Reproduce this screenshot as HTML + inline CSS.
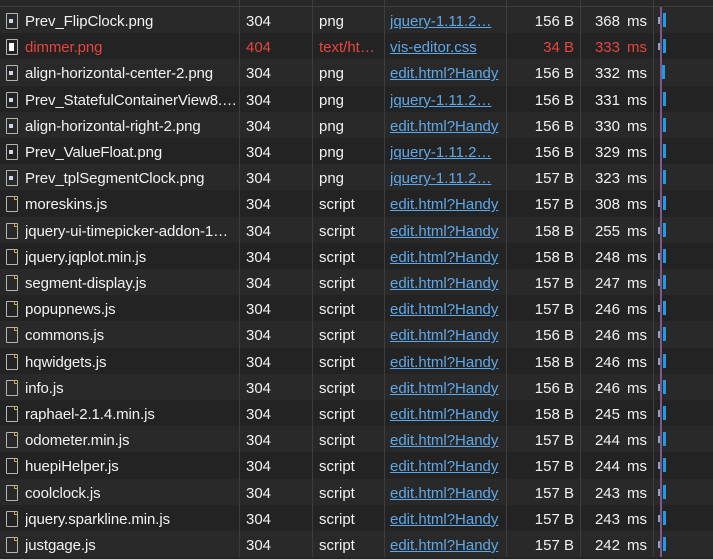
<!DOCTYPE html>
<html><head><meta charset="utf-8"><style>
body{margin:0;width:713px;height:557px;overflow:hidden;background:#242424;font-family:"Segoe UI","Liberation Sans",sans-serif;font-size:15px;color:#f2f2f2;position:relative}
.hdr{position:absolute;left:0;top:0;width:713px;height:7px;background:#282828;border-bottom:1px solid #3d3d3d;box-sizing:border-box}
.row{position:absolute;left:0;width:713px;height:26.2px;line-height:26px}
.row:nth-child(odd){background:#292929}
.row:nth-child(even){background:#232323}
.c{position:absolute;top:2px;white-space:nowrap;overflow:hidden}
.n{left:25px;width:212px;letter-spacing:-0.1px}
.s{left:246px}
.t{left:319px;width:60px}
.i{left:390px;color:#5fa8e8;text-decoration:underline;width:112px}
.z{right:139px;text-align:right}
.ms{left:586px;width:34px;text-align:right}
.u{left:627px}
.red .c{color:#e8443f}
.red .i{color:#5fa8e8}
.ic{position:absolute;left:6px;top:6px;width:12px;height:16px;border:1.5px solid #b5b5b5;border-radius:1px;box-sizing:border-box}
.img .ic:before{content:"";position:absolute;left:2px;top:5px;width:4px;height:4px;background:#cfd8e8}
.red .ic:before{background:#fff;width:5px;height:8px;top:3px}
.js .ic:after{content:"";position:absolute;right:-1px;top:-1px;width:3px;height:3px;border-left:1.5px solid #c9a84a;border-bottom:1.5px solid #c9a84a}
.vl{position:absolute;top:0;width:1px;height:557px;background:#3d3d3d}
.bar{position:absolute;left:663px;top:6px;width:3px;height:14px;background:#1a9ce8}
.g{position:absolute;left:658px;top:10px;width:2px;height:7px;background:#8da3c0}
</style></head><body>
<div class="hdr"></div>
<div id="rows" style="position:absolute;left:0;top:7px">
<div class="row img" style="top:0"><div class="ic"></div><div class="c n">Prev_FlipClock.png</div><div class="c s">304</div><div class="c t">png</div><div class="c i">jquery-1.11.2…</div><div class="c z">156 B</div><div class="c ms">368</div><div class="c u">ms</div><div class="g"></div><div class="bar"></div></div>
<div class="row img red" style="top:26.2px"><div class="ic"></div><div class="c n">dimmer.png</div><div class="c s">404</div><div class="c t">text/ht…</div><div class="c i">vis-editor.css</div><div class="c z">34 B</div><div class="c ms">333</div><div class="c u">ms</div><div class="g"></div><div class="bar"></div></div>
<div class="row img" style="top:52.4px"><div class="ic"></div><div class="c n">align-horizontal-center-2.png</div><div class="c s">304</div><div class="c t">png</div><div class="c i">edit.html?Handy</div><div class="c z">156 B</div><div class="c ms">332</div><div class="c u">ms</div><div class="bar" style="left:662px"></div></div>
<div class="row img" style="top:78.6px"><div class="ic"></div><div class="c n">Prev_StatefulContainerView8.…</div><div class="c s">304</div><div class="c t">png</div><div class="c i">jquery-1.11.2…</div><div class="c z">156 B</div><div class="c ms">331</div><div class="c u">ms</div><div class="bar"></div></div>
<div class="row img" style="top:104.8px"><div class="ic"></div><div class="c n">align-horizontal-right-2.png</div><div class="c s">304</div><div class="c t">png</div><div class="c i">edit.html?Handy</div><div class="c z">156 B</div><div class="c ms">330</div><div class="c u">ms</div><div class="bar"></div></div>
<div class="row img" style="top:131px"><div class="ic"></div><div class="c n">Prev_ValueFloat.png</div><div class="c s">304</div><div class="c t">png</div><div class="c i">jquery-1.11.2…</div><div class="c z">156 B</div><div class="c ms">329</div><div class="c u">ms</div><div class="bar"></div></div>
<div class="row img" style="top:157.2px"><div class="ic"></div><div class="c n">Prev_tplSegmentClock.png</div><div class="c s">304</div><div class="c t">png</div><div class="c i">jquery-1.11.2…</div><div class="c z">157 B</div><div class="c ms">323</div><div class="c u">ms</div><div class="bar"></div></div>
<div class="row js" style="top:183.4px"><div class="ic"></div><div class="c n">moreskins.js</div><div class="c s">304</div><div class="c t">script</div><div class="c i">edit.html?Handy</div><div class="c z">157 B</div><div class="c ms">308</div><div class="c u">ms</div><div class="g"></div><div class="bar"></div></div>
<div class="row js" style="top:209.6px"><div class="ic"></div><div class="c n">jquery-ui-timepicker-addon-1…</div><div class="c s">304</div><div class="c t">script</div><div class="c i">edit.html?Handy</div><div class="c z">158 B</div><div class="c ms">255</div><div class="c u">ms</div><div class="g"></div><div class="bar"></div></div>
<div class="row js" style="top:235.8px"><div class="ic"></div><div class="c n">jquery.jqplot.min.js</div><div class="c s">304</div><div class="c t">script</div><div class="c i">edit.html?Handy</div><div class="c z">158 B</div><div class="c ms">248</div><div class="c u">ms</div><div class="g"></div><div class="bar"></div></div>
<div class="row js" style="top:262px"><div class="ic"></div><div class="c n">segment-display.js</div><div class="c s">304</div><div class="c t">script</div><div class="c i">edit.html?Handy</div><div class="c z">157 B</div><div class="c ms">247</div><div class="c u">ms</div><div class="g"></div><div class="bar"></div></div>
<div class="row js" style="top:288.2px"><div class="ic"></div><div class="c n">popupnews.js</div><div class="c s">304</div><div class="c t">script</div><div class="c i">edit.html?Handy</div><div class="c z">157 B</div><div class="c ms">246</div><div class="c u">ms</div><div class="g"></div><div class="bar"></div></div>
<div class="row js" style="top:314.4px"><div class="ic"></div><div class="c n">commons.js</div><div class="c s">304</div><div class="c t">script</div><div class="c i">edit.html?Handy</div><div class="c z">156 B</div><div class="c ms">246</div><div class="c u">ms</div><div class="g"></div><div class="bar"></div></div>
<div class="row js" style="top:340.6px"><div class="ic"></div><div class="c n">hqwidgets.js</div><div class="c s">304</div><div class="c t">script</div><div class="c i">edit.html?Handy</div><div class="c z">158 B</div><div class="c ms">246</div><div class="c u">ms</div><div class="g"></div><div class="bar"></div></div>
<div class="row js" style="top:366.8px"><div class="ic"></div><div class="c n">info.js</div><div class="c s">304</div><div class="c t">script</div><div class="c i">edit.html?Handy</div><div class="c z">156 B</div><div class="c ms">246</div><div class="c u">ms</div><div class="g"></div><div class="bar"></div></div>
<div class="row js" style="top:393px"><div class="ic"></div><div class="c n">raphael-2.1.4.min.js</div><div class="c s">304</div><div class="c t">script</div><div class="c i">edit.html?Handy</div><div class="c z">158 B</div><div class="c ms">245</div><div class="c u">ms</div><div class="g"></div><div class="bar"></div></div>
<div class="row js" style="top:419.2px"><div class="ic"></div><div class="c n">odometer.min.js</div><div class="c s">304</div><div class="c t">script</div><div class="c i">edit.html?Handy</div><div class="c z">157 B</div><div class="c ms">244</div><div class="c u">ms</div><div class="g"></div><div class="bar"></div></div>
<div class="row js" style="top:445.4px"><div class="ic"></div><div class="c n">huepiHelper.js</div><div class="c s">304</div><div class="c t">script</div><div class="c i">edit.html?Handy</div><div class="c z">157 B</div><div class="c ms">244</div><div class="c u">ms</div><div class="g"></div><div class="bar"></div></div>
<div class="row js" style="top:471.6px"><div class="ic"></div><div class="c n">coolclock.js</div><div class="c s">304</div><div class="c t">script</div><div class="c i">edit.html?Handy</div><div class="c z">157 B</div><div class="c ms">243</div><div class="c u">ms</div><div class="g"></div><div class="bar"></div></div>
<div class="row js" style="top:497.8px"><div class="ic"></div><div class="c n">jquery.sparkline.min.js</div><div class="c s">304</div><div class="c t">script</div><div class="c i">edit.html?Handy</div><div class="c z">157 B</div><div class="c ms">243</div><div class="c u">ms</div><div class="g"></div><div class="bar"></div></div>
<div class="row js" style="top:524px"><div class="ic"></div><div class="c n">justgage.js</div><div class="c s">304</div><div class="c t">script</div><div class="c i">edit.html?Handy</div><div class="c z">157 B</div><div class="c ms">242</div><div class="c u">ms</div><div class="g"></div><div class="bar"></div></div>
</div>
<div class="vl" style="left:239px"></div>
<div class="vl" style="left:312px"></div>
<div class="vl" style="left:384px"></div>
<div class="vl" style="left:506px"></div>
<div class="vl" style="left:580px"></div>
<div class="vl" style="left:653px"></div>
<div style="position:absolute;left:660px;top:7px;width:1px;height:550px;background:#3b6fd8"></div>
<div style="position:absolute;left:661px;top:7px;width:1px;height:550px;background:#c8413d"></div>
</body></html>
